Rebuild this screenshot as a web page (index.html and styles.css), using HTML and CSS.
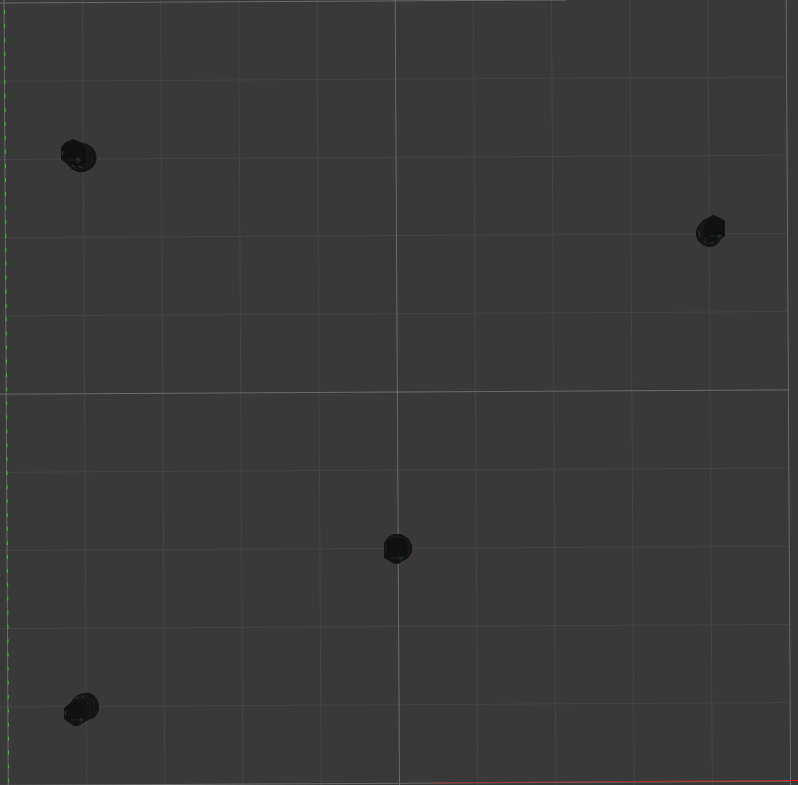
FILE: index.html
```html
<!DOCTYPE html>
<html lang="en">
<head>
<meta charset="utf-8">
<meta name="viewport" content="width=device-width, initial-scale=1">
<title>Viewport</title>
<link rel="stylesheet" href="styles.css">
</head>
<body>
<main class="viewport">
<svg class="scene" viewBox="0 0 798 785" preserveAspectRatio="xMidYMid slice" role="img" aria-label="Top view of four objects on a grid">
  <!-- Minor grid -->
  <g class="minor">
    <path d="M82.4 0L86.6 785M160.6 0L164.8 785M238.6 0L242.9 785M316.9 0L321.2 785M473.3 0L477.7 785M551.5 0L555.9 785M629.7 0L634.1 785M707.9 0L712.3 785"/>
    <path d="M0 81.3L787 77M0 159.5L787 155.2M0 237.7L788 233.4M0 315.9L788 311.6M0 472.3L789 468M0 550.5L789 546.2M0 628.7L790 624.4M0 706.9L790 702.6"/>
  </g>
  <!-- Major grid -->
  <g class="major">
    <path d="M4 0L8.3 785M395.2 0L399.5 785M786.2 0L790.6 785"/>
    <path d="M0 3L566 0M0 394.2L788.5 389.9M0 785.4L790.6 781.2"/>
  </g>
  <!-- World axes -->
  <path class="axis-y" d="M4.5 -3.8L8.7 785"/>
  <path class="axis-x soft" d="M434 782.8L640 781.5"/>
  <path class="axis-x" d="M640 781.4L790 780.6"/>
  <path class="axis-x bright" d="M790 780.5H798"/>

  <!-- Upper left object -->
  <g>
    <path class="shell" d="M61 147L66 142L73 139L80 142L87 144Q94 147 96 154Q98 162 92 168Q86 173 78 172Q71 170 68 165L61 159Z"/>
    <path class="body" d="M63 147L73 140L82 145L86 150V163L77 168L63 158Z"/>
    <path class="rim" d="M84 145L88 149V163L83 169M88 147L92 151V162L87 168M72 166L77 169M80 166L84 169"/>
    <path class="mark" d="M62.500 151V155M72 165L75 167M78 166L82 168"/>
    <path class="arrow" d="M68 160H77M77 157L81 160L77 163Z"/>
  </g>
  <!-- Right object -->
  <g>
    <path class="shell" d="M713 215L719 217L725 221V236L721 239Q718 246 710 247Q701 246 697 239Q694 231 699 225Q702 220 707 218Z"/>
    <path class="body" d="M713 217L724 222V236L716 241L704 237V223Z"/>
    <path class="rim" d="M703 222Q697 229 700 236Q703 244 710 244M707 221Q701 228 703 236L708 241"/>
    <path class="mark" d="M699 231L700 237M704 241L707 243M710 243H713"/>
    <path class="arrow" d="M709 236H718M718 234L722 236L718 239Z"/>
  </g>
  <!-- Centre object -->
  <g>
    <path class="shell" d="M384 543L388 537L394 534H401L408 538L412 545V552L408 558L398 564H394L384 558Z"/>
    <path class="body" d="M386 543L396 536L407 541V556L397 562L386 556Z"/>
    <path class="rim" d="M389 539Q398 534 405 539L409 545V552L405 558M386 544V555"/>
    <path class="arrow" d="M391 558H400M400 556L404 558L400 561Z"/>
  </g>
  <!-- Lower left object -->
  <g>
    <path class="shell" d="M64 708L70 703L75 697Q82 692 90 693Q98 697 99 705Q100 713 94 718L86 721L78 726H74L64 719Z"/>
    <path class="body" d="M66 708L76 702L86 707V719L77 724L66 718Z"/>
    <path class="rim" d="M75 700L82 696L90 701V716M85 696L94 701V714M78 701L85 699L88 704"/>
    <path class="mark" d="M65.500 711V715M75 699L78 697M81 698L84 696"/>
    <path class="arrow" d="M71 720H80M80 718L84 720L80 723Z"/>
  </g>
</svg>
</main>
</body>
</html>
```
FILE: styles.css
```css
body {
  margin: 0;
  background: #393939;
}

.viewport {
  height: 100vh;
  overflow: hidden;
}

.scene {
  display: block;
  width: 100%;
  height: 100%;
}

.minor,
.major,
.axis-x,
.axis-y,
.rim,
.mark {
  fill: none;
  stroke-width: 1;
}

.minor {
  stroke: #444444;
}

.major {
  stroke: #6b6b6b;
}

.axis-y {
  stroke: #20cc20;
  stroke-dasharray: 4 9.97;
}

.axis-x {
  stroke: #b83030;
}

.soft {
  stroke: #a03434;
}

.bright {
  stroke: #ff0808;
}

.shell {
  fill: #131313;
}

.body {
  fill: #101010;
}

.rim {
  stroke: #1c1c1c;
}

.mark {
  stroke: #343434;
}

.arrow {
  fill: #18301a;
  stroke: #18281a;
}
```
